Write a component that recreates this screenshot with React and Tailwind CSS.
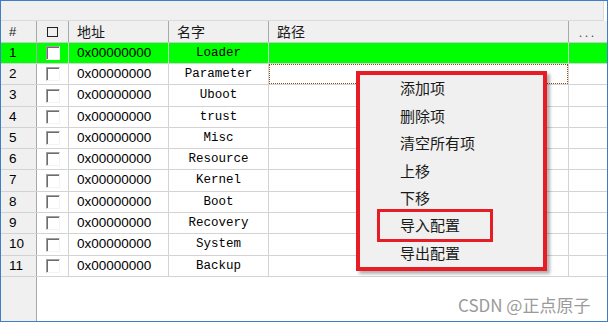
import React from 'react';

const rows = [
  { n: 1, name: 'Loader', h: 'h-[21px]' },
  { n: 2, name: 'Parameter', h: 'h-[21px]' },
  { n: 3, name: 'Uboot', h: 'h-[22px]' },
  { n: 4, name: 'trust', h: 'h-[21px]' },
  { n: 5, name: 'Misc', h: 'h-[21px]' },
  { n: 6, name: 'Resource', h: 'h-[21px]' },
  { n: 7, name: 'Kernel', h: 'h-[22px]' },
  { n: 8, name: 'Boot', h: 'h-[21px]' },
  { n: 9, name: 'Recovery', h: 'h-[21px]' },
  { n: 10, name: 'System', h: 'h-[22px]' },
  { n: 11, name: 'Backup', h: 'h-[21px]' },
];

const menuItems = ['添加项', '删除项', '清空所有项', '上移', '下移', '导入配置', '导出配置'];

const sans = "font-['Liberation_Sans',Arial,sans-serif]";
const cjk = "font-['Noto_Sans_CJK_SC','Liberation_Sans',sans-serif]";
const mono = "font-['Liberation_Mono','Courier_New',monospace]";

function CheckBox() {
  return (
    <div className="w-[14px] h-[14px] bg-white border border-t-[#a0a0a0] border-l-[#a0a0a0] border-r-[#f4f4f4] border-b-[#f4f4f4] shadow-[inset_1px_1px_0_#6d6d6d]" />
  );
}

export default function App() {
  return (
    <div className="w-[609px] h-[322px] bg-white overflow-hidden">
      <div className="relative w-[608px] h-[322px] border border-[#3d7fc6] flex flex-col">
        {/* empty toolbar strip */}
        <div className="h-[20px] shrink-0 bg-[#f0f0f0] border-b border-r border-[#dadada] mr-[3px]" />

        {/* Header */}
        <div className={`h-[22px] shrink-0 flex bg-[#f0f0f0] border-b border-[#c8c8c8] text-[#1a1a1a] ${cjk} text-[14px]`}>
          <div className={`w-[36px] shrink-0 border-r border-[#a8a8a8] pl-[8px] flex items-center ${sans} text-[13px]`}>#</div>
          <div className="w-[32px] shrink-0 border-r border-[#a8a8a8] flex items-center justify-center">
            <div className="w-[11px] h-[10px] border-[1.5px] border-[#222]" />
          </div>
          <div className="w-[100px] shrink-0 border-r border-[#a8a8a8] pl-[8px] flex items-center">地址</div>
          <div className="w-[100px] shrink-0 border-r border-[#a8a8a8] pl-[8px] flex items-center">名字</div>
          <div className="w-[300px] shrink-0 border-r border-[#a8a8a8] pl-[8px] flex items-center">路径</div>
          <div className="flex-1 flex items-end justify-center pb-[2px] text-[11px] tracking-[3px] text-[#444]">...</div>
        </div>

        {/* Rows */}
        <div className="flex-1 flex flex-col">
          {rows.map((r) => {
            const selected = r.n === 1;
            return (
              <div
                key={r.n}
                className={`${r.h} shrink-0 flex border-b border-[#d3d3d3] ${selected ? 'bg-[#00ff00]' : 'bg-white'} text-black`}
              >
                <div className={`w-[36px] shrink-0 border-r border-[#a8a8a8] pl-[8px] flex items-center ${sans} text-[13.5px] ${selected ? '' : 'bg-[#f0f0f0]'}`}>
                  {r.n}
                </div>
                <div className="w-[32px] shrink-0 border-r border-[#d3d3d3] flex items-center justify-center">
                  <CheckBox />
                </div>
                <div className={`w-[100px] shrink-0 border-r border-[#d3d3d3] pl-[8px] flex items-center ${sans} text-[13.5px]`}>
                  0x00000000
                </div>
                <div className={`w-[100px] shrink-0 border-r border-[#d3d3d3] flex items-center justify-center ${mono} text-[12.5px]`}>
                  {r.name}
                </div>
                <div className="w-[300px] shrink-0 border-r border-[#d3d3d3] flex">
                  {r.n === 2 && <div className="flex-1 border border-dotted border-[#9a4a10]" />}
                </div>
                <div className="flex-1" />
              </div>
            );
          })}
          <div className="flex-1 flex">
            <div className="w-[36px] shrink-0 bg-[#f0f0f0] border-r border-[#a8a8a8]" />
            <div className="flex-1 bg-white" />
          </div>
        </div>

        {/* Context menu */}
        <div className="absolute left-[355px] top-[70px] w-[191px] h-[200px] border-4 border-[#e81c24] bg-[#f0f0f0] shadow-[3px_3px_3px_rgba(0,0,0,0.3)]">
          <div className={`flex flex-col ${cjk} text-[15px] text-[#1a1a1a]`}>
            {menuItems.map((m) => (
              <div key={m} className="h-[27.4px] flex items-center pl-[40px]">
                {m}
              </div>
            ))}
          </div>
          <div className="absolute left-[17px] top-[134px] w-[116px] h-[33px] border-[3px] border-[#e81c24]" />
        </div>

        {/* Watermark */}
        <div className={`absolute left-[457px] top-[291px] text-[17px] text-[#9a9a9a] ${cjk}`}>
          CSDN @正点原子
        </div>
      </div>
    </div>
  );
}
